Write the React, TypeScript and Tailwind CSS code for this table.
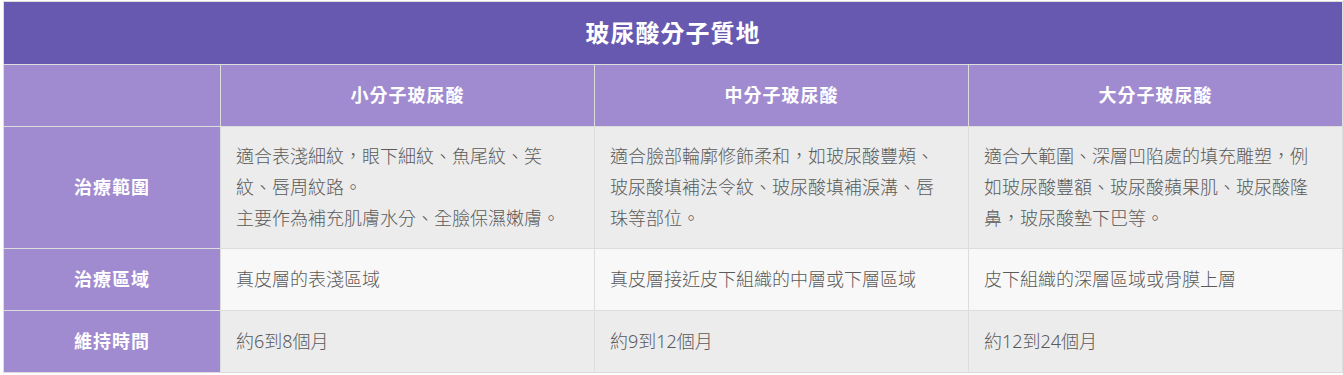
const font = { fontFamily: '"Noto Sans", "Noto Sans CJK TC", sans-serif' };

type Row = {
  label: string;
  cells: string[][];
  tall?: boolean;
  bg: string;
};

const rows: Row[] = [
  {
    label: '治療範圍',
    tall: true,
    bg: 'bg-[#ececec]',
    cells: [
      ['適合表淺細紋，眼下細紋、魚尾紋、笑紋、唇周紋路。', '主要作為補充肌膚水分、全臉保濕嫩膚。'],
      ['適合臉部輪廓修飾柔和，如玻尿酸豐頰、玻尿酸填補法令紋、玻尿酸填補淚溝、唇珠等部位。'],
      ['適合大範圍、深層凹陷處的填充雕塑，例如玻尿酸豐額、玻尿酸蘋果肌、玻尿酸隆鼻，玻尿酸墊下巴等。'],
    ],
  },
  {
    label: '治療區域',
    bg: 'bg-[#f8f8f8]',
    cells: [['真皮層的表淺區域'], ['真皮層接近皮下組織的中層或下層區域'], ['皮下組織的深層區域或骨膜上層']],
  },
  {
    label: '維持時間',
    bg: 'bg-[#ececec]',
    cells: [['約6到8個月'], ['約9到12個月'], ['約12到24個月']],
  },
];

const heads = ['小分子玻尿酸', '中分子玻尿酸', '大分子玻尿酸'];

const App = () => {
  return (
    <div className="bg-white pl-[3px] pt-[1px]" style={font}>
      <table className="w-[1339px] table-fixed border-collapse border border-[#dddddd]">
        <colgroup>
          <col className="w-[217px]" />
          <col className="w-[374px]" />
          <col className="w-[374px]" />
          <col className="w-[374px]" />
        </colgroup>
        <thead>
          <tr className="h-[63px]">
            <th
              colSpan={4}
              className="bg-[#6759b0] text-white text-[24px] font-bold tracking-[1px] text-center border border-[#dddddd]"
            >
              玻尿酸分子質地
            </th>
          </tr>
          <tr className="h-[62px]">
            <th className="bg-[#a18bd0] border border-[#dddddd]"></th>
            {heads.map((h) => (
              <th
                key={h}
                className="bg-[#a18bd0] text-white text-[18px] font-bold tracking-[1px] text-center border border-[#dddddd]"
              >
                {h}
              </th>
            ))}
          </tr>
        </thead>
        <tbody>
          {rows.map((r) => (
            <tr key={r.label} className={r.tall ? 'h-[122px]' : 'h-[62px]'}>
              <td className="bg-[#a18bd0] text-white text-[18px] font-bold tracking-[1px] text-center align-middle border border-[#dddddd]">
                {r.label}
              </td>
              {r.cells.map((c, i) => (
                <td
                  key={i}
                  className={`${r.bg} text-[#5a5a5a] text-[18px] font-light leading-[31px] pl-[15px] pr-6 align-middle border border-[#dddddd]`}
                >
                  {c.map((p, j) => (
                    <p key={j}>{p}</p>
                  ))}
                </td>
              ))}
            </tr>
          ))}
        </tbody>
      </table>
    </div>
  );
};

export default App;
